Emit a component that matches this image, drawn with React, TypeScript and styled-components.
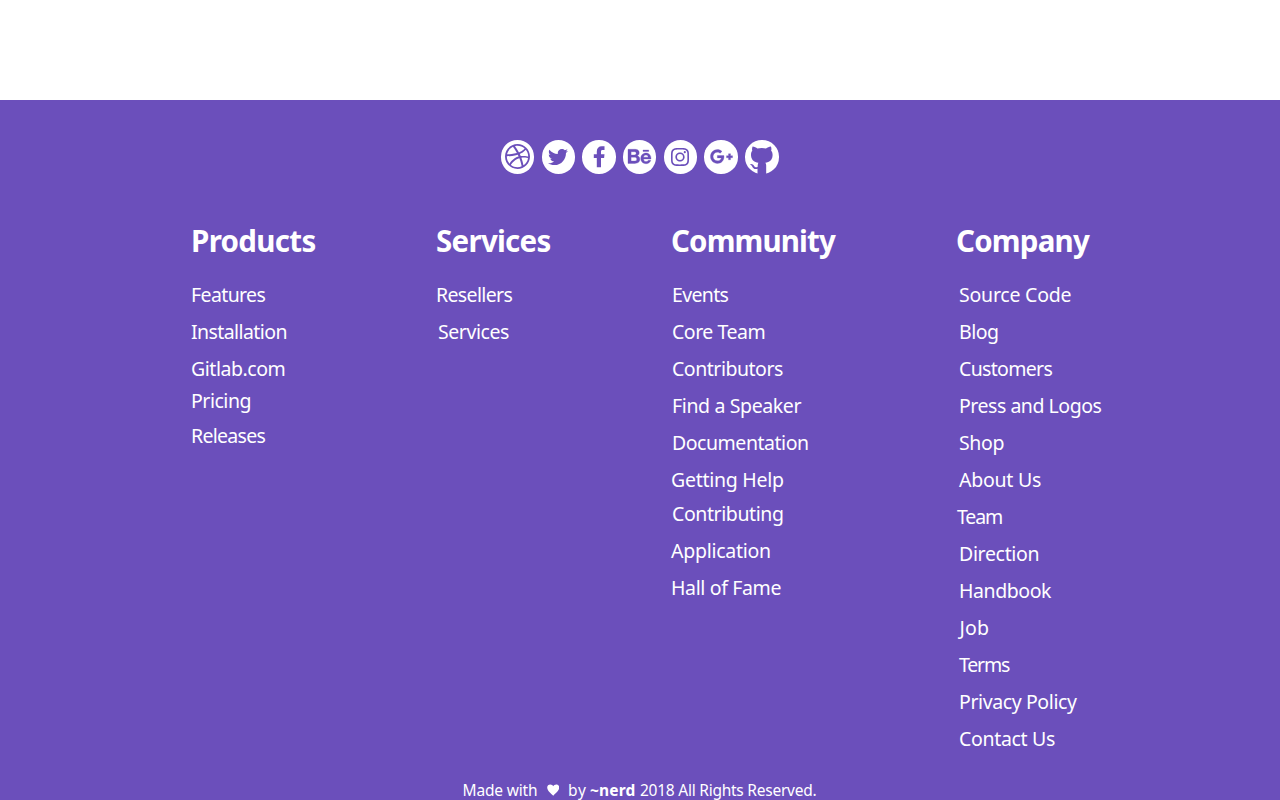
import { useLayoutEffect, useRef, useState } from 'react';
import styled, { createGlobalStyle } from 'styled-components';
import { SiDribbble, SiInstagram } from 'react-icons/si';
import { FaTwitter, FaBehance, FaGooglePlusG } from 'react-icons/fa';

const GlobalStyle = createGlobalStyle`
  * { box-sizing: border-box; }
  body {
    margin: 0;
    background: #fff;
    font-family: 'Segoe UI', 'Noto Sans', sans-serif;
  }
`;

const Page = styled.div`
  height: 800px;
  padding-top: 100px;
  overflow: hidden;
`;

const Footer = styled.footer`
  height: 700px;
  padding-top: 40px;
  background: #6b4fbb;
  color: #fff;
`;

const Social = styled.nav`
  display: flex;
  justify-content: center;
  gap: 7.2px;
  height: 81px;
  padding-right: 0.6px;
`;

const Badge = styled.a<{ $size: number; $weight?: number }>`
  display: flex;
  align-items: center;
  justify-content: center;
  width: 33.5px;
  height: 33.5px;
  border-radius: 50%;
  background: #fff;
  color: #6b4fbb;

  svg {
    flex: none;
    width: ${(p) => p.$size}px;
    height: ${(p) => p.$size}px;
    overflow: visible;
    stroke-width: ${(p) => p.$weight ?? 0}px;
  }
`;

const Columns = styled.div`
  display: grid;
  grid-template-columns: 245px 235px 286px 200px;
  height: 558px;
  padding-left: 191px;
`;

const Heading = styled.h2<{ $inset?: number }>`
  height: 40px;
  margin: 0 0 15px ${(p) => p.$inset ?? 0}px;
  font-size: 29.5px;
  font-weight: 700;
  line-height: 40px;
  white-space: nowrap;
`;

const List = styled.ul`
  margin: 0;
  padding: 0;
  list-style: none;
`;

const Item = styled.li<{ $inset?: number; $pull?: number }>`
  height: 37px;
  margin: ${(p) => -(p.$pull ?? 0)}px 0 0 ${(p) => p.$inset ?? 0}px;
  font-size: 19.5px;
  line-height: 37px;
  white-space: nowrap;
`;

const Credit = styled.p`
  display: flex;
  height: 22px;
  margin: 0;
  padding-left: 462.5px;
  font-size: 15.5px;
  line-height: 22px;
  white-space: nowrap;
`;

const CreditPart = styled.span<{ $width: number; $bold?: boolean }>`
  width: ${(p) => p.$width}px;
  font-weight: ${(p) => (p.$bold ? 700 : 400)};
`;

const Heart = styled.svg`
  width: 12.5px;
  height: 12px;
  margin: 5px 9px 0 0;
  fill: #fff;
`;

function FacebookIcon() {
  return (
    <svg viewBox="0 0 21 21" fill="currentColor">
      <path d="M7.8 21.3V11.9H4.8V8.3h3V5.6C7.8 2.2 9.7.3 12.8.3h2.7V4h-1.8c-1.4 0-1.7.6-1.7 1.7v2.6h3.5l-.4 3.6h-3.1v9.4Z" />
    </svg>
  );
}

function GithubIcon() {
  return (
    <svg viewBox="0 0 34 34" fill="currentColor">
      <path d="M7.7 6.6C9.6 6.6 11.2 7.6 12.6 8.7Q17 7.7 21.3 8.7C22.8 7.6 24.4 6.6 26.3 6.6 27 8.4 26.9 10 26.5 11 27.9 12.4 28.2 14.4 27.9 16.5 27.4 20.6 24.8 22.4 20.6 23 21.4 24 21.5 24.8 21.5 26V35.5H12.7V29.3C9.2 30 8.2 28.6 7.3 26.8 6.8 25.7 6 25.2 5.1 24.6 6.8 24 8.3 24.8 9.2 26.3 10 27.6 11.2 28 12.8 27.4 12.9 25.8 12.9 24.2 13.6 23 9.4 22.4 6.8 20.6 6.2 16.5 5.9 14.4 6.2 12.4 7.4 11 7 10 7 8.4 7.7 6.6Z" />
    </svg>
  );
}

/* Tracks a label so its letters span the given width. */
function Tracked({ text, span }: { text: string; span: number }) {
  const ref = useRef<HTMLSpanElement>(null);
  const [spacing, setSpacing] = useState(0);
  useLayoutEffect(() => {
    const ctx = document.createElement('canvas').getContext('2d');
    if (!ref.current || !ctx) return;
    const css = getComputedStyle(ref.current);
    ctx.font = `${css.fontWeight} ${css.fontSize} ${css.fontFamily}`;
    const m = ctx.measureText(text);
    const natural = m.actualBoundingBoxLeft + m.actualBoundingBoxRight;
    setSpacing((span - natural) / (text.length - 1));
  }, [text, span]);
  return (
    <span ref={ref} style={{ letterSpacing: spacing }}>
      {text}
    </span>
  );
}

type Entry = { text: string; span: number; inset?: number; pull?: number };

const columns: { title: Entry; items: Entry[] }[] = [
  {
    title: { text: 'Products', span: 122.5 },
    items: [
      { text: 'Features', span: 73.5 },
      { text: 'Installation', span: 95.5 },
      { text: 'Gitlab.com', span: 92.5 },
      { text: 'Pricing', span: 58.5, pull: 5 },
      { text: 'Releases', span: 73.5, pull: 2 },
    ],
  },
  {
    title: { text: 'Services', span: 113.5 },
    items: [
      { text: 'Resellers', span: 75.5 },
      { text: 'Services', span: 70, inset: 2 },
    ],
  },
  {
    title: { text: 'Community', span: 164 },
    items: [
      { text: 'Events', span: 55.5, inset: 1 },
      { text: 'Core Team', span: 91.5, inset: 1 },
      { text: 'Contributors', span: 110, inset: 1 },
      { text: 'Find a Speaker', span: 128.5, inset: 1 },
      { text: 'Documentation', span: 135, inset: 1 },
      { text: 'Getting Help', span: 111 },
      { text: 'Contributing', span: 110, inset: 1, pull: 3 },
      { text: 'Application', span: 99 },
      { text: 'Hall of Fame', span: 108.5 },
    ],
  },
  {
    title: { text: 'Company', span: 133, inset: -1 },
    items: [
      { text: 'Source Code', span: 110.5, inset: 2 },
      { text: 'Blog', span: 38, inset: 2 },
      { text: 'Customers', span: 92.5, inset: 2 },
      { text: 'Press and Logos', span: 141.5, inset: 2 },
      { text: 'Shop', span: 43.5, inset: 2 },
      { text: 'About Us', span: 82, inset: 2 },
      { text: 'Team', span: 45, inset: 0 },
      { text: 'Direction', span: 78.5, inset: 2 },
      { text: 'Handbook', span: 92, inset: 2 },
      { text: 'Job', span: 30.5, inset: 2.6 },
      { text: 'Terms', span: 51, inset: 2 },
      { text: 'Privacy Policy', span: 117, inset: 2 },
      { text: 'Contact Us', span: 95, inset: 2 },
    ],
  },
];

export default function App() {
  return (
    <Page>
      <GlobalStyle />
      <Footer>
        <Social>
          <Badge $size={25}><SiDribbble /></Badge>
          <Badge $size={20}><FaTwitter /></Badge>
          <Badge $size={21}><FacebookIcon /></Badge>
          <Badge $size={23} $weight={8}><FaBehance /></Badge>
          <Badge $size={18}><SiInstagram /></Badge>
          <Badge $size={23} $weight={8}><FaGooglePlusG /></Badge>
          <Badge $size={33.5}><GithubIcon /></Badge>
        </Social>
        <Columns>
          {columns.map(({ title, items }) => (
            <section key={title.text}>
              <Heading $inset={title.inset}>
                <Tracked text={title.text} span={title.span} />
              </Heading>
              <List>
                {items.map((item) => (
                  <Item key={item.text} $inset={item.inset} $pull={item.pull}>
                    <Tracked text={item.text} span={item.span} />
                  </Item>
                ))}
              </List>
            </section>
          ))}
        </Columns>
        <Credit>
          <CreditPart $width={84}><Tracked text="Made with" span={73.5} /></CreditPart>
          <Heart viewBox="0 0 12 12" preserveAspectRatio="none">
            <path d="M6 11.7C4.5 9.7.2 7 .2 3.4.2 1.6 1.5.4 3.1.4 4.4.4 5.5 1.1 6 2.3 6.5 1.1 7.6.4 8.9.4c1.6 0 2.9 1.2 2.9 3C11.8 7 7.5 9.7 6 11.7Z" />
          </Heart>
          <CreditPart $width={22}><Tracked text="by" span={17} /></CreditPart>
          <CreditPart $width={50} $bold><Tracked text="~nerd" span={44.5} /></CreditPart>
          <CreditPart $width={180}><Tracked text="2018 All Rights Reserved." span={176.5} /></CreditPart>
        </Credit>
      </Footer>
    </Page>
  );
}
